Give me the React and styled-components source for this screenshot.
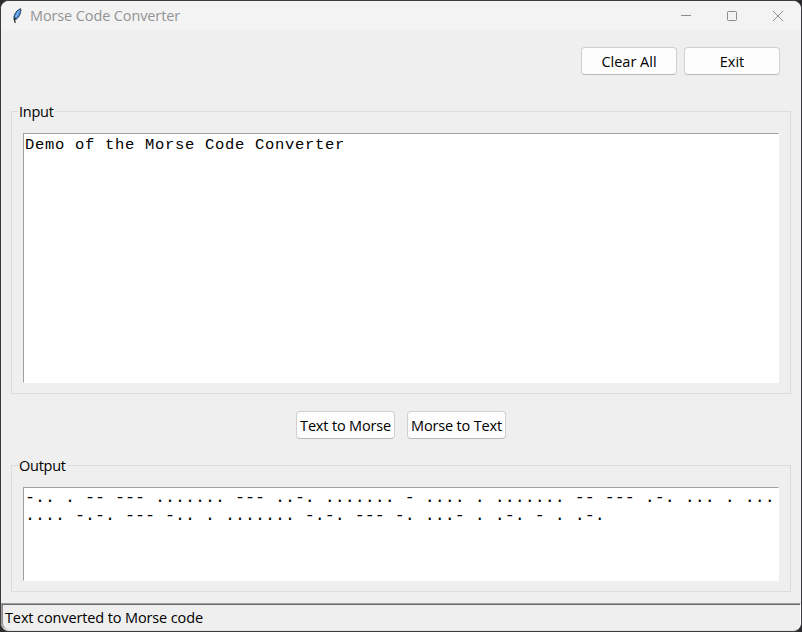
import React from "react";
import styled, { createGlobalStyle } from "styled-components";

const GlobalStyle = createGlobalStyle`
  * { box-sizing: border-box; }
  html, body { margin: 0; height: 632px; overflow: hidden; background: #2b2a2c; }
`;

const Window = styled.div`
  width: 802px;
  height: 632px;
  border: 1px solid #3b3a3c;
  border-radius: 9px;
  background: #efefef;
  overflow: hidden;
  display: flex;
  flex-direction: column;
  font-family: "Open Sans", "Noto Sans", sans-serif;
  font-size: 14.5px;
  letter-spacing: -0.12px;
  color: #000;
`;

const TitleBar = styled.header`
  height: 30px;
  flex: none;
  display: flex;
  align-items: center;
  background: #f3f3f3;
  color: #949494;
  padding-left: 9px;
`;

const Title = styled.h1`
  margin: 0 auto 0 6px;
  font-size: 14.5px;
  font-weight: 400;
  line-height: 30px;
`;

const Controls = styled.div`
  display: flex;
  align-items: center;
`;

const ControlButton = styled.button`
  width: 46px;
  height: 30px;
  padding: 0;
  border: 0;
  background: none;
  color: #8e8e8e;
  display: grid;
  place-items: center;
`;

const Toolbar = styled.div`
  height: 69px;
  flex: none;
  display: flex;
  justify-content: flex-end;
  align-items: flex-start;
  gap: 7px;
  padding: 16px 21px 0 0;
`;

const Button = styled.button`
  width: ${(p) => p.$width}px;
  height: 28px;
  padding: 1px 0 0;
  border: 1px solid #d0d0d0;
  border-bottom-color: #b9b9b9;
  border-radius: 4px;
  background: #fdfdfd;
  color: #000;
  font: inherit;
  line-height: 25px;
  letter-spacing: ${(p) => p.$spacing || "0"};
  white-space: nowrap;
`;

const Group = styled.fieldset`
  margin: 0 10px;
  padding: 0 11px 10px;
  min-width: 0;
  height: ${(p) => p.$height}px;
  flex: none;
  border: 1px solid #dcdcdc;
`;

const Legend = styled.legend`
  margin-left: -5px;
  padding: ${(p) => p.$drop || 0}px 1px 0;
  height: 22px;
  line-height: 22px;
  letter-spacing: -0.25px;
`;

const TextBox = styled.div`
  height: ${(p) => p.$height}px;
  margin: 11px 0 0;
  border: 1px solid #fff;
  border-top-color: #a0a0a0;
  border-left-color: #a0a0a0;
  background: #fff;
  padding: 1px;
  font-family: "Liberation Mono", monospace;
  font-size: 16.667px;
  letter-spacing: 0;
  line-height: 18px;
  white-space: pre;
`;

const InputBox = styled(TextBox)`
  padding-top: 2px;
  font-size: 15.5px;
  letter-spacing: 0.7px;
`;

const Actions = styled.div`
  height: 60px;
  flex: none;
  display: flex;
  justify-content: center;
  gap: 12px;
  padding-top: 17px;
`;

const StatusBar = styled.footer`
  margin-top: auto;
  height: 28px;
  flex: none;
  border-top: 1px solid #a0a0a0;
  border-left: 1px solid #a0a0a0;
  border-right: 1px solid #fff;
  border-bottom: 1px solid #e3e3e3;
  border-radius: 0 0 8px 8px;
  box-shadow: inset 0 1px #696969, inset 1px 0 #8a8a8a;
  padding-left: 3px;
  line-height: 27px;
`;

function Feather() {
  return (
    <svg width="14" height="18" viewBox="0 0 14 18">
      <path d="M10.8 1.8 C8 2.3 5 5.6 4.2 9 C3.7 11 3.8 12 4.4 12.9 C7 12.3 9.2 9.8 10.1 6.8 C10.8 4.6 11.2 3 10.8 1.8Z" fill="#4d93e6" stroke="#1b2630" strokeWidth="1" strokeDasharray="2.6 0.5" />
      <path d="M9.4 3.6 L5.2 10.5" stroke="#8fc2fa" strokeWidth="1" />
      <path d="M5.4 10.5 L4.6 13 L5.2 16" fill="none" stroke="#101010" strokeWidth="1.1" />
    </svg>
  );
}

const LINES = [
  "-.. . -- --- ....... --- ..-. ....... - .... . ....... -- --- .-. ... . ...",
  ".... -.-. --- -.. . ....... -.-. --- -. ...- . .-. - . .-.",
];

export default function App() {
  return (
    <>
      <GlobalStyle />
      <Window>
        <TitleBar>
          <Feather />
          <Title>Morse Code Converter</Title>
          <Controls>
            <ControlButton aria-label="Minimize">
              <svg width="12" height="12" viewBox="0 0 12 12" stroke="currentColor"><path d="M1 5.5H11" /></svg>
            </ControlButton>
            <ControlButton aria-label="Maximize">
              <svg width="10" height="10" viewBox="0 0 10 10" fill="none" stroke="currentColor"><rect x=".5" y=".5" width="9" height="9" rx=".7" /></svg>
            </ControlButton>
            <ControlButton aria-label="Close">
              <svg width="10" height="10" viewBox="0 0 10 10" stroke="currentColor"><path d="M0 0L10 10M10 0L0 10" /></svg>
            </ControlButton>
          </Controls>
        </TitleBar>
        <Toolbar>
          <Button $width={96}>Clear All</Button>
          <Button $width={96}>Exit</Button>
        </Toolbar>
        <Group $height={294}>
          <Legend $drop={1}>Input</Legend>
          <InputBox $height={250}>Demo of the Morse Code Converter</InputBox>
        </Group>
        <Actions>
          <Button $width={99} $spacing="-0.17px">Text to Morse</Button>
          <Button $width={99} $spacing="-0.17px">Morse to Text</Button>
        </Actions>
        <Group $height={138}>
          <Legend $drop={1}>Output</Legend>
          <TextBox $height={94}>{LINES.join("\n")}</TextBox>
        </Group>
        <StatusBar>Text converted to Morse code</StatusBar>
      </Window>
    </>
  );
}
